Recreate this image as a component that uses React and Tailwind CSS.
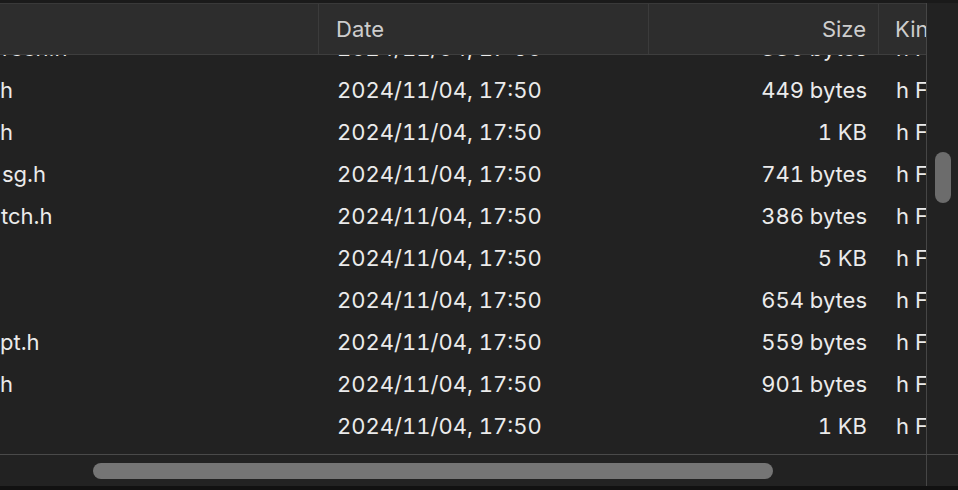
import React from 'react'

const rows = [
  { name: 'reen.h', size: '336 bytes', pad: 'pl-[2px]' },
  { name: 'h', size: '449 bytes', pad: 'pl-0' },
  { name: 'h', size: '1 KB', pad: 'pl-0' },
  { name: 'sg.h', size: '741 bytes', pad: 'pl-[2px]' },
  { name: 'tch.h', size: '386 bytes', pad: 'pl-[1px]' },
  { name: '', size: '5 KB', pad: 'pl-0' },
  { name: '', size: '654 bytes', pad: 'pl-0' },
  { name: 'pt.h', size: '559 bytes', pad: 'pl-0' },
  { name: 'h', size: '901 bytes', pad: 'pl-0' },
  { name: '', size: '1 KB', pad: 'pl-0' },
]

function HeaderCell({ children, className }) {
  return <div className={'flex items-center h-full ' + className}>{children}</div>
}

export default function App() {
  return (
    <div
      className="w-[958px] h-[490px] bg-[#222222] flex flex-col overflow-hidden text-[22px] tabular-nums text-[#ebebeb]"
      style={{ fontFamily: 'Inter, "Noto Sans", sans-serif' }}
    >
      <div className="h-[3px] bg-[#1a1a1a] shrink-0" />
      <div className="flex flex-1 min-h-0">
        <div className="w-[926px] flex flex-col overflow-hidden">
          <div className="relative z-10 h-[52px] shrink-0 bg-[#2d2d2d] border-t border-[#393939] border-b border-b-[#3e3e3e] flex text-[#cdcdcd]">
            <HeaderCell className="w-[319px] border-r border-[#3b3b3b]" />
            <HeaderCell className="w-[330px] border-r border-[#3b3b3b] pl-[17px]">Date</HeaderCell>
            <HeaderCell className="w-[230px] border-r border-[#3b3b3b] justify-end pr-[12px]">Size</HeaderCell>
            <HeaderCell className="flex-1 pl-[16px] whitespace-nowrap overflow-hidden">Kind</HeaderCell>
          </div>
          <div className="-mt-[28px] flex flex-col">
            {rows.map((r, i) => (
              <div key={i} className="h-[42px] shrink-0 flex items-center whitespace-nowrap">
                <div className={'w-[320px] overflow-hidden ' + r.pad}>{r.name}</div>
                <div className="w-[330px] pl-[17px]">2024/11/04, 17:50</div>
                <div className="w-[229px] text-right pr-[12px]">{r.size}</div>
                <div className="flex-1 pl-[17px] overflow-hidden">h File</div>
              </div>
            ))}
          </div>
        </div>
        <div className="w-px bg-[#464646]" />
        <div className="flex-1 pt-[149px] pl-[8px]">
          <div className="w-[16px] h-[51px] rounded-full bg-[#6c6c6c]" />
        </div>
      </div>
      <div className="h-px bg-[#4a4a4a] shrink-0" />
      <div className="h-[31px] shrink-0 flex">
        <div className="w-[926px] pt-[8px] pl-[93px]">
          <div className="w-[680px] h-[16px] rounded-full bg-[#757575]" />
        </div>
        <div className="w-px bg-[#464646]" />
        <div className="flex-1" />
      </div>
      <div className="h-[4px] bg-[#111111] shrink-0" />
    </div>
  )
}
